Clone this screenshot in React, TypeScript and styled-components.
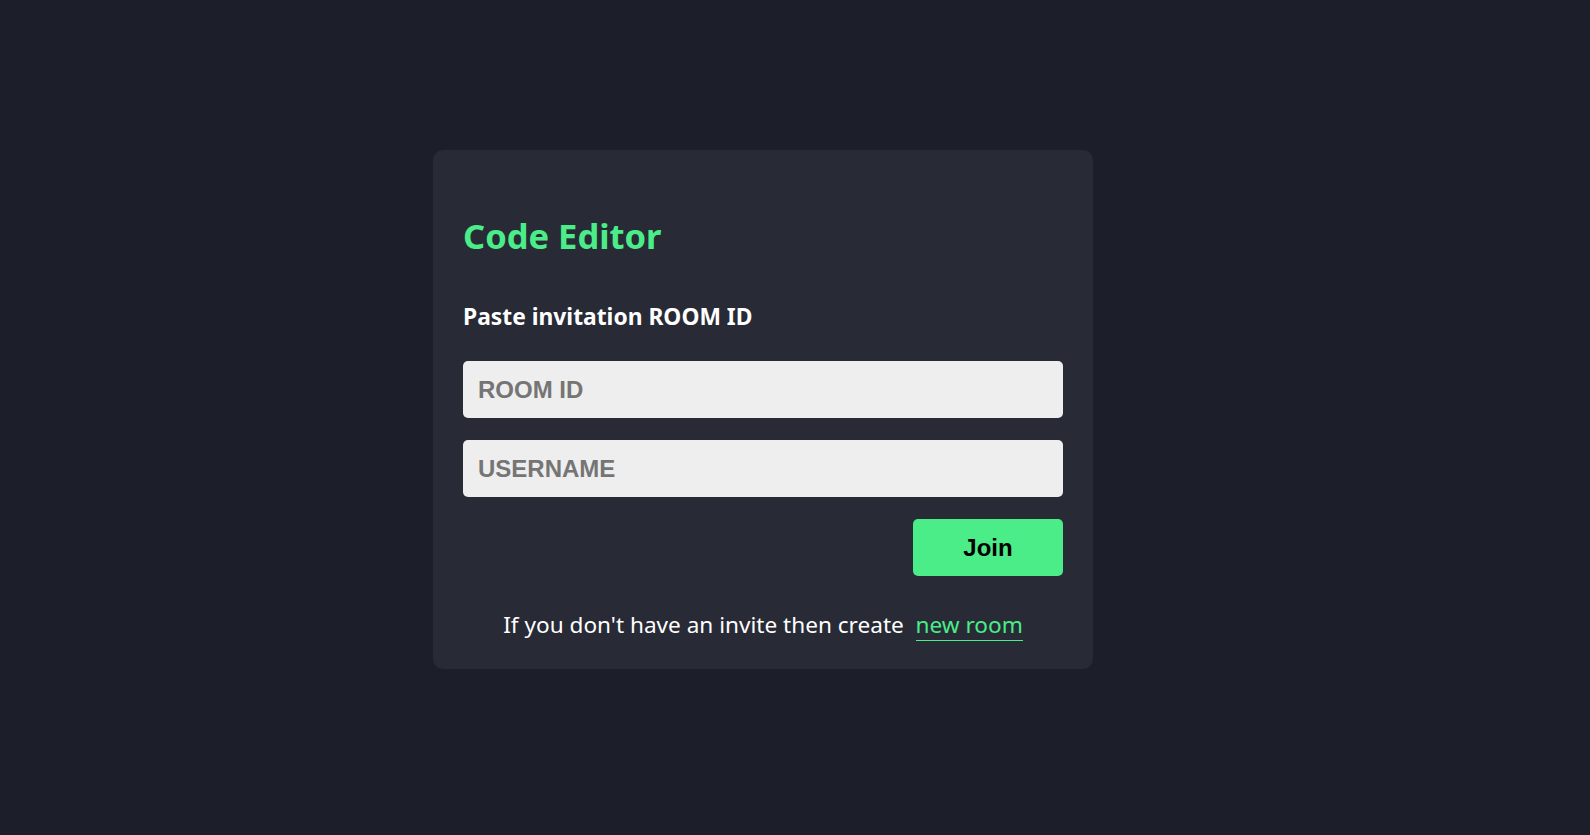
import React, { useState } from 'react';
import styled, { createGlobalStyle } from 'styled-components';

const GlobalStyle = createGlobalStyle`
  html, body {
    margin: 0;
    padding: 0;
    background: #1c1e29;
  }
  * {
    box-sizing: border-box;
  }
`;

const App = () => {
  const [roomId, setRoomId] = useState('');
  const [username, setUsername] = useState('');

  return (
    <Page>
      <GlobalStyle />
      <Card>
        <Title>Code Editor</Title>
        <Label>Paste invitation ROOM ID</Label>
        <Form>
          <Input
            type="text"
            placeholder="ROOM ID"
            value={roomId}
            onChange={(e) => setRoomId(e.target.value)}
          />
          <Input
            type="text"
            placeholder="USERNAME"
            value={username}
            onChange={(e) => setUsername(e.target.value)}
          />
          <JoinButton>Join</JoinButton>
        </Form>
        <Footer>
          If you don't have an invite then create&nbsp;&nbsp;
          <NewRoomLink href="#">new room</NewRoomLink>
        </Footer>
      </Card>
    </Page>
  );
};

const Page = styled.div`
  min-height: 100vh;
  padding: 150px 0 0 433px;
  background: #1c1e29;
  font-family: 'Noto Sans', 'Open Sans', sans-serif;
`;

const Card = styled.div`
  display: flex;
  flex-direction: column;
  width: 660px;
  padding: 66px 30px 28px;
  background: #282a36;
  border-radius: 10px;
`;

const Title = styled.h1`
  margin: 0;
  font-size: 34.5px;
  line-height: 40px;
  font-weight: 700;
  color: #4aed88;
`;

const Label = styled.h4`
  margin: 46px 0 0;
  font-size: 22.8px;
  line-height: 30px;
  font-weight: 700;
  color: #ffffff;
`;

const Form = styled.div`
  display: flex;
  flex-direction: column;
  gap: 22px;
  margin-top: 29px;
`;

const Input = styled.input`
  width: 100%;
  height: 57px;
  padding: 0 15px;
  background: #eeeeee;
  border: none;
  border-radius: 5px;
  outline: none;
  font-family: 'Liberation Sans', Arial, sans-serif;
  font-size: 24px;
  font-weight: 700;
  color: #333;

  &::placeholder {
    color: #757575;
  }
`;

const JoinButton = styled.button`
  align-self: flex-end;
  width: 150px;
  height: 57px;
  background: #4aed88;
  border: none;
  border-radius: 5px;
  font-family: 'Liberation Sans', Arial, sans-serif;
  font-size: 24px;
  font-weight: 700;
  color: #000;
  cursor: pointer;
`;

const Footer = styled.p`
  margin: 33px 0 0;
  text-align: center;
  font-size: 22.6px;
  line-height: 32px;
  color: #ffffff;
`;

const NewRoomLink = styled.a`
  color: #4aed88;
  text-decoration: none;
  border-bottom: 1px solid #4aed88;
`;

export default App;
